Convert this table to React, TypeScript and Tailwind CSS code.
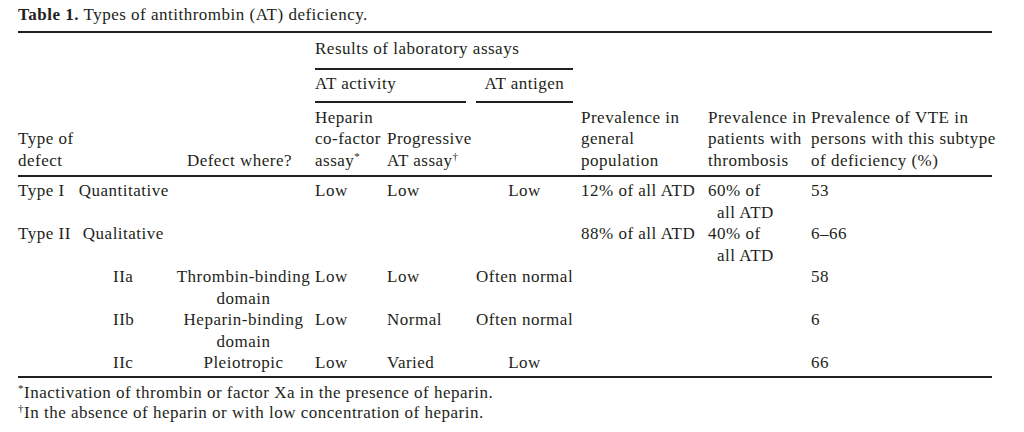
const cols = "grid w-[974px] grid-cols-[152px_145px_72px_89px_105px_127px_103px_181px]";

function Row({ cells }: { cells: React.ReactNode[] }) {
  return (
    <>
      {cells.map((c, i) => (
        <div key={i} className="whitespace-nowrap">
          {c}
        </div>
      ))}
    </>
  );
}

export default function App() {
  return (
    <div className="w-[1024px] h-[432px] bg-white px-[18px] pt-[4px] font-['Liberation_Serif',serif] text-[17px] leading-[21.5px] tracking-[0.5px] text-[#231f20]">
      {/* Caption */}
      <p>
        <span className="font-bold">Table 1.</span> Types of antithrombin (AT) deficiency.
      </p>

      {/* Header */}
      <div className={`${cols} mt-[5px] border-t-2 border-b-2 border-[#231f20]`}>
        <div className="row-start-1 col-start-3 col-span-3 mr-[8px] border-b-2 border-[#231f20] pt-[5px] pb-[9px]">
          Results of laboratory assays
        </div>
        <div className="row-start-2 col-start-3 col-span-2 mr-[10px] border-b-2 border-[#231f20] pt-[3px] pb-[6px]">
          AT activity
        </div>
        <div className="row-start-2 col-start-5 mr-[8px] border-b-2 border-[#231f20] pt-[3px] pb-[6px] text-center">
          AT antigen
        </div>

        <div className="row-start-3 col-start-1 self-end pb-[4px]">
          Type of
          <br />
          defect
        </div>
        <div className="row-start-3 col-start-2 self-end pb-[4px] pr-[23px] text-right">Defect where?</div>
        <div className="row-start-3 col-start-3 self-end pt-[4px] pb-[4px]">
          Heparin
          <br />
          co-factor
          <br />
          assay<sup className="text-[11px]">*</sup>
        </div>
        <div className="row-start-3 col-start-4 self-end pb-[4px]">
          Progressive
          <br />
          AT assay<sup className="text-[11px]">†</sup>
        </div>
        <div className="row-start-3 col-start-6 self-end pb-[4px]">
          Prevalence in
          <br />
          general
          <br />
          population
        </div>
        <div className="row-start-3 col-start-7 self-end pb-[4px] whitespace-nowrap">
          Prevalence in
          <br />
          patients with
          <br />
          thrombosis
        </div>
        <div className="row-start-3 col-start-8 self-end pb-[4px] whitespace-nowrap">
          Prevalence of VTE in
          <br />
          persons with this subtype
          <br />
          of deficiency (%)
        </div>
      </div>

      {/* Body */}
      <div className={`${cols} pt-[3px] pb-[2px] border-b-2 border-[#231f20]`}>
        <Row
          cells={[
            <>
              Type I<span className="ml-[14px]">Quantitative</span>
            </>,
            null,
            "Low",
            "Low",
            <div className="text-center pr-[8px]">Low</div>,
            "12% of all ATD",
            <>
              60% of
              <div className="pl-[9px]">all ATD</div>
            </>,
            "53",
          ]}
        />
        <Row
          cells={[
            <>
              Type II<span className="ml-[12px]">Qualitative</span>
            </>,
            null,
            null,
            null,
            null,
            "88% of all ATD",
            <>
              40% of
              <div className="pl-[9px]">all ATD</div>
            </>,
            "6–66",
          ]}
        />
        <Row
          cells={[
            <div className="pl-[95px]">IIa</div>,
            <div className="text-center pl-[2px]">
              Thrombin-binding
              <br />
              domain
            </div>,
            "Low",
            "Low",
            <div className="text-center pr-[8px]">Often normal</div>,
            null,
            null,
            "58",
          ]}
        />
        <Row
          cells={[
            <div className="pl-[95px]">IIb</div>,
            <div className="text-center pl-[2px]">
              Heparin-binding
              <br />
              domain
            </div>,
            "Low",
            "Normal",
            <div className="text-center pr-[8px]">Often normal</div>,
            null,
            null,
            "6",
          ]}
        />
        <Row
          cells={[
            <div className="pl-[95px]">IIc</div>,
            <div className="text-center pl-[2px]">Pleiotropic</div>,
            "Low",
            "Varied",
            <div className="text-center pr-[8px]">Low</div>,
            null,
            null,
            "66",
          ]}
        />
      </div>

      {/* Footnotes */}
      <div className="pt-[5px] leading-[20px]">
        <p>
          <sup className="text-[11px]">*</sup>Inactivation of thrombin or factor Xa in the presence of heparin.
        </p>
        <p>
          <sup className="text-[11px]">†</sup>In the absence of heparin or with low concentration of heparin.
        </p>
      </div>
    </div>
  );
}
